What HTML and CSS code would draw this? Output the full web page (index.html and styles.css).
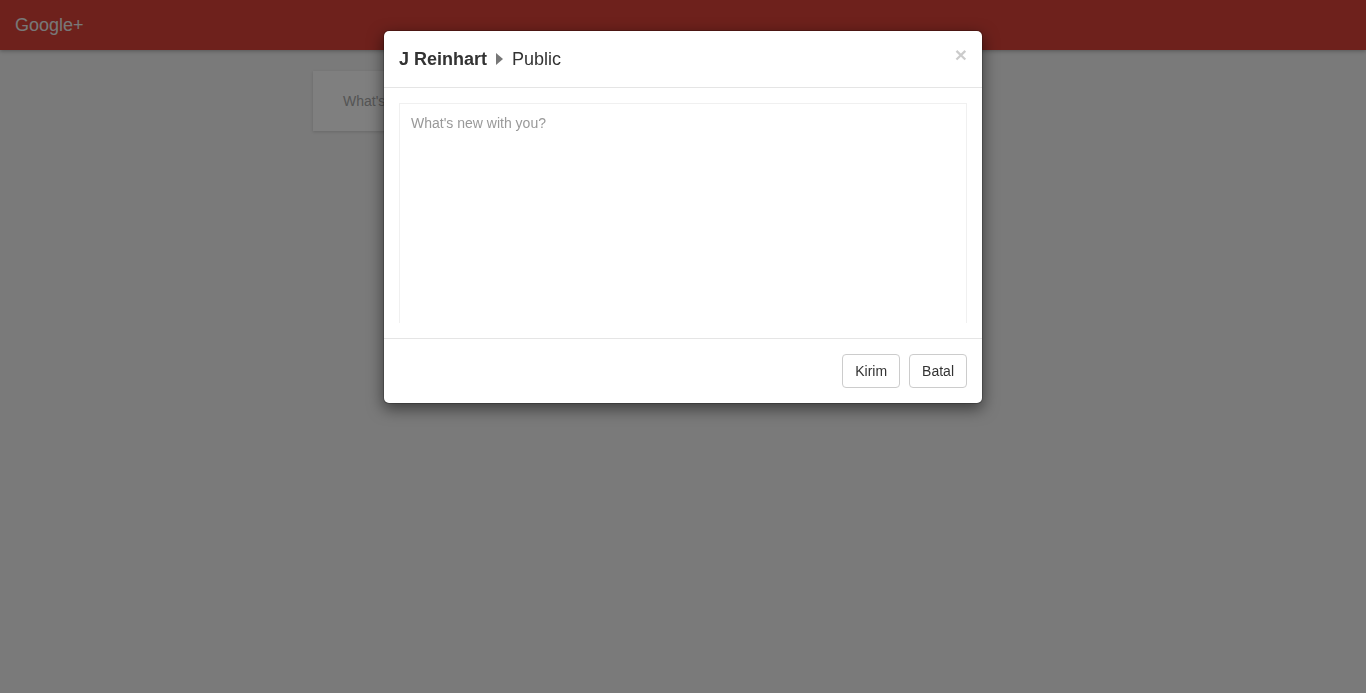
FILE: index.html
```html
<!DOCTYPE html>
<html>
<head>
<meta charset="utf-8">
<title>Google+</title>
<link rel="stylesheet" href="styles.css">
</head>
<body>
<header class="navbar">
  <span class="brand">Google+</span>
</header>
<main class="stream">
  <div class="share-card">What's new with you?</div>
</main>

<div class="backdrop"></div>
<div class="modal">
  <div class="modal-header">
    <h4 class="modal-title"><b>J Reinhart</b><span class="caret"></span>Public</h4>
    <span class="close">×</span>
  </div>
  <div class="modal-body">
    <textarea class="composer" placeholder="What's new with you?"></textarea>
  </div>
  <div class="modal-footer">
    <button class="btn">Kirim</button>
    <button class="btn">Batal</button>
  </div>
</div>
</body>
</html>
```
FILE: styles.css
```css
* { box-sizing: border-box; }
html, body { margin: 0; height: 100%; }
body {
  background: #f4f4f4;
  font-family: "Liberation Sans", Arial, sans-serif;
  font-size: 14px;
  color: #333;
}
.navbar {
  height: 50px;
  background: #dc4338;
  display: flex;
  align-items: center;
  padding: 0 15px;
  box-shadow: 0 1px 4px rgba(0,0,0,.3);
}
.brand {
  color: #f0f0f0;
  font-size: 18px;
  line-height: 20px;
}
.stream {
  display: flex;
  padding-top: 21px;
  padding-left: 313px;
}
.share-card {
  width: 560px;
  height: 60px;
  background: #fff;
  padding: 0 30px;
  display: flex;
  align-items: center;
  color: #aaa;
  font-size: 14px;
  box-shadow: 0 1px 3px rgba(0,0,0,.15);
}
.backdrop {
  position: fixed;
  inset: 0;
  background: rgba(0,0,0,.5);
}
.modal {
  position: absolute;
  top: 30px;
  left: calc(50% - 300px);
  width: 600px;
  background: #fff;
  border: 1px solid rgba(0,0,0,.2);
  border-radius: 6px;
  box-shadow: 0 5px 15px rgba(0,0,0,.5);
  background-clip: padding-box;
}
.modal-header {
  display: flex;
  align-items: flex-start;
  justify-content: space-between;
  padding: 15px;
  border-bottom: 1px solid #e5e5e5;
}
.modal-title {
  margin: 0;
  font-size: 18px;
  font-weight: normal;
  line-height: 26px;
  color: #333;
  display: flex;
  align-items: center;
}
.modal-title b { font-weight: bold; }
.caret {
  display: inline-block;
  width: 0;
  height: 0;
  border-top: 6px solid transparent;
  border-bottom: 6px solid transparent;
  border-left: 7px solid #777;
  margin: 0 9px 0 9px;
}
.close {
  font-size: 21px;
  font-weight: bold;
  line-height: 1;
  color: #000;
  opacity: .2;
  margin-top: -2px;
  margin-right: 0;
}
.modal-body {
  padding: 16px 15px 15px;
}
.composer {
  display: block;
  width: 100%;
  height: 220px;
  border: 1px solid #f0f0f0;
  border-bottom: none;
  padding: 9px 11px;
  font-family: "Liberation Sans", Arial, sans-serif;
  font-size: 14px;
  line-height: 20px;
  resize: none;
  outline: none;
  margin-top: -1px;
}
.composer::placeholder { color: #999; }
.modal-footer {
  display: flex;
  justify-content: flex-end;
  gap: 9px;
  padding: 15px 15px;
  border-top: 1px solid #e5e5e5;
}
.btn {
  height: 34px;
  padding: 6px 12px;
  font-family: "Liberation Sans", Arial, sans-serif;
  font-size: 14px;
  line-height: 20px;
  color: #333;
  background: #fff;
  border: 1px solid #ccc;
  border-radius: 4px;
}
```
